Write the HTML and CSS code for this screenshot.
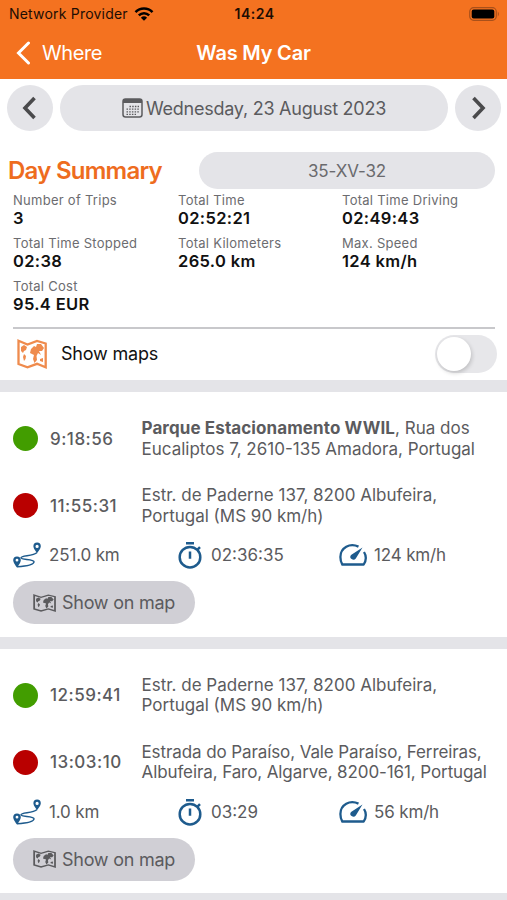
FILE: index.html
```html
<!DOCTYPE html>
<html lang="en">
<head>
<meta charset="utf-8">
<title>Was My Car</title>
<link rel="stylesheet" href="styles.css">
</head>
<body>
<svg class="defs" width="0" height="0" aria-hidden="true">
  <symbol id="map" viewBox="0 0 30 30">
    <path d="M1.500 1.800 L10.500 5.500 L20 2 L28.700 4.500 V28.200 L20 24.800 L10.500 28.300 L1.500 25 Z" fill="none" stroke="currentColor" stroke-width="2.300"/>
    <path d="M4 8 L7 6 L10 8 L9 11 L7 12 L6 14 L4 12 Z M7 15 L9 17 L8.500 20 L7 22 L6 18 Z M14 10 L17 7 L19 8 L20 5 L24 5 L27 9 L25 12 L22 12 L24 16 L21 14 L19.500 17 L20 21 L17.500 24 L16 20 L17 16 L13 14 Z M23 20 L26 19 L26 23 L23 22 Z" fill="currentColor"/>
  </symbol>
  <symbol id="route" viewBox="0 0 28 26">
    <path d="M24 10.500 C20 14.500 8 13 8 15.800 C8 18 21 16.800 21 19.800 C21 23 12 24.300 4 24.800" fill="none" stroke="currentColor" stroke-width="1.500"/>
    <path fill-rule="evenodd" d="M24.100 .5 A3.700 3.700 0 0 0 20.400 4.300 C20.400 7 24.100 11 24.100 11 S27.800 7 27.800 4.300 A3.700 3.700 0 0 0 24.100 .5 Z M24.100 2.800 A1.600 1.600 0 1 1 24.100 6 A1.600 1.600 0 1 1 24.100 2.800 Z M4 14.500 A3.800 3.800 0 0 0 .2 18.300 C.2 21 4 25.500 4 25.500 S7.800 21 7.800 18.300 A3.800 3.800 0 0 0 4 14.500 Z M4 16.800 A1.400 1.400 0 1 1 4 19.600 A1.400 1.400 0 1 1 4 16.800 Z" fill="currentColor"/>
  </symbol>
  <symbol id="timer" viewBox="0 0 24 28">
    <g fill="none" stroke="currentColor" stroke-width="2.500">
      <circle cx="12" cy="16.200" r="10.300"/>
      <path d="M8 2.300 H16 M12 10.500 V17.800 M19.300 8.900 L22 6.200"/>
    </g>
  </symbol>
  <symbol id="gauge" viewBox="0 0 28 24">
    <path d="M19.500 3.600 C11 -.5 1.400 4.500 1.400 14 C1.400 17 2 19.500 3.300 21.500 H24.700 C27.200 17.500 27.200 12.500 25 9" fill="none" stroke="currentColor" stroke-width="2.300" stroke-linejoin="round"/>
    <path d="M23.500 4.500 L16.800 15.500 A2.800 2.800 0 0 1 12 11.900 Z" fill="currentColor"/>
  </symbol>
</svg>

<header class="header">
  <div class="status">
    <div class="carrier"><span>Network Provider</span>
      <svg width="20" height="14" viewBox="0 0 20 14"><g fill="none" stroke="#000" stroke-width="2.500"><path d="M1.500 5.200 C6.200 .3 13.800 .3 18.500 5.200"/><path d="M4.800 8.400 C7.800 5.500 12.200 5.500 15.200 8.400"/></g><path d="M10 13.800 L6.900 10.700 Q10 8 13.100 10.700 Z"/></svg>
    </div>
    <span class="clock">14:24</span>
    <svg class="battery" width="31" height="14" viewBox="0 0 31 14"><rect x=".7" y=".7" width="26.600" height="12.600" rx="4" fill="none" stroke="#a9501a" stroke-width="1.200"/><rect x="2.700" y="2.500" width="22.600" height="9" rx="2"/><path d="M28.800 4.500 Q31 7 28.800 9.500 Z" fill="#a9501a"/></svg>
  </div>
  <nav class="nav">
    <a class="back"><svg width="15" height="24" viewBox="0 0 15 24"><path d="M12.500 2 L2.500 12 L12.500 22" fill="none" stroke="#fff" stroke-width="3" stroke-linecap="round"/></svg><span>Where</span></a>
    <h1 class="title">Was My Car</h1>
  </nav>
</header>

<div class="dates">
  <button class="round"><svg width="16" height="24" viewBox="0 0 16 24"><path d="M12.500 2 L3 12 L12.500 22" fill="none" stroke="currentColor" stroke-width="3.600"/></svg></button>
  <button class="day"><svg width="21" height="20" viewBox="0 0 21 20"><rect x="1" y="1" width="19" height="18" rx="2.500" fill="none" stroke="currentColor" stroke-width="1.500"/><path d="M1 2.500 Q1 1 3 1 H18 Q20 1 20 2.500 V5 H1 Z" fill="currentColor"/><path d="M7.500 8.500 H17 M4.500 11.200 H17 M4.500 13.800 H17 M4.500 16.300 H14" stroke="currentColor" stroke-width="1.300" stroke-dasharray="1.500 1.200"/></svg><span>Wednesday, 23 August 2023</span></button>
  <button class="round"><svg width="16" height="24" viewBox="0 0 16 24"><path d="M3.500 2 L13 12 L3.500 22" fill="none" stroke="currentColor" stroke-width="3.600"/></svg></button>
</div>

<section class="summary">
  <div class="summary-head">
    <h2>Day Summary</h2>
    <button class="plate">35-XV-32</button>
  </div>
  <dl class="stats">
    <div><dt>Number of Trips</dt><dd>3</dd></div>
    <div><dt>Total Time</dt><dd>02:52:21</dd></div>
    <div><dt>Total Time Driving</dt><dd>02:49:43</dd></div>
    <div><dt>Total Time Stopped</dt><dd>02:38</dd></div>
    <div><dt>Total Kilometers</dt><dd>265.0 km</dd></div>
    <div><dt>Max. Speed</dt><dd>124 km/h</dd></div>
    <div><dt>Total Cost</dt><dd>95.4 EUR</dd></div>
  </dl>
  <div class="maps">
    <svg class="maps-icon" width="30" height="30"><use href="#map"/></svg>
    <span>Show maps</span>
    <span class="switch"><span class="knob"></span></span>
  </div>
</section>

<article class="trip">
  <div class="stop"><i class="dot start"></i><time>9:18:56</time><p><b>Parque Estacionamento WWIL</b>, Rua dos<br>Eucaliptos 7, 2610-135 Amadora, Portugal</p></div>
  <div class="stop"><i class="dot end"></i><time>11:55:31</time><p>Estr. de Paderne 137, 8200 Albufeira,<br>Portugal (MS 90 km/h)</p></div>
  <div class="figures">
    <span class="distance"><svg width="28" height="26"><use href="#route"/></svg>251.0 km</span>
    <span class="duration"><svg width="24" height="28"><use href="#timer"/></svg>02:36:35</span>
    <span class="speed"><svg width="28" height="24"><use href="#gauge"/></svg>124 km/h</span>
  </div>
  <button class="show"><svg width="23" height="18" viewBox="0 0 30 30" preserveAspectRatio="none"><use href="#map" width="30" height="30"/></svg><span>Show on map</span></button>
</article>

<article class="trip">
  <div class="stop"><i class="dot start"></i><time>12:59:41</time><p>Estr. de Paderne 137, 8200 Albufeira,<br>Portugal (MS 90 km/h)</p></div>
  <div class="stop"><i class="dot end"></i><time>13:03:10</time><p class="long">Estrada do Paraíso, Vale Paraíso, Ferreiras,<br>Albufeira, Faro, Algarve, 8200-161, Portugal</p></div>
  <div class="figures">
    <span class="distance"><svg width="28" height="26"><use href="#route"/></svg>1.0 km</span>
    <span class="duration"><svg width="24" height="28"><use href="#timer"/></svg>03:29</span>
    <span class="speed"><svg width="28" height="24"><use href="#gauge"/></svg>56 km/h</span>
  </div>
  <button class="show"><svg width="23" height="18" viewBox="0 0 30 30" preserveAspectRatio="none"><use href="#map" width="30" height="30"/></svg><span>Show on map</span></button>
</article>
<div class="end-band"></div>
</body>
</html>
```
FILE: styles.css
```css
* { box-sizing: border-box; margin: 0; padding: 0; }
html { overflow: hidden; }
body {
  height: 900px;
  overflow: hidden;
  background: #fff;
  color: #5b5b5e;
  font-family: Inter, "Liberation Sans", sans-serif;
  white-space: nowrap;
}
svg { display: block; flex: none; }
.defs { position: absolute; }
button { border: 0; font: inherit; color: inherit; display: flex; align-items: center; justify-content: center; background: #e4e4e8; white-space: nowrap; }

.header { height: 79px; background: #f47220; }
.status { height: 27px; display: grid; grid-template-columns: 1fr auto 1fr; align-items: center; padding: 0 7px 0 9px; color: #1d0d03; }
.carrier { display: flex; align-items: center; gap: 6px; font-size: 14px; letter-spacing: 0.2px; }
.clock { font-size: 14px; font-weight: 600; letter-spacing: 0.5px; }
.battery { justify-self: end; }
.nav { height: 52px; display: grid; grid-template-columns: 1fr auto 1fr; align-items: center; padding: 0 16px; color: #fff; }
.back { display: flex; align-items: center; gap: 11px; font-size: 20px; letter-spacing: -0.4px; }
.title { font-size: 20px; font-weight: 600; letter-spacing: -0.2px; }

.dates { display: flex; justify-content: space-between; padding: 6px 6px 0 7px; height: 73px; color: #5b5b5e; }
.round { width: 46px; height: 46px; border-radius: 50%; color: #4a4a4c; }
.day { width: 388px; height: 46px; border-radius: 23px; gap: 3px; font-size: 18px; letter-spacing: -0.24px; }

.summary-head { display: flex; align-items: center; justify-content: space-between; padding: 0 12px 0 8px; height: 37px; }
.summary-head h2 { font-size: 24px; font-weight: 600; letter-spacing: -0.75px; color: #ee6c1e; }
.plate { width: 296px; height: 37px; border-radius: 19px; font-size: 17px; letter-spacing: -0.1px; color: #6a6a6d; }
.stats { display: grid; grid-template-columns: 165px 164px 1fr; grid-auto-rows: 43px; margin: 2px 12px 0 13px; height: 138px; border-bottom: 2px solid #c8c8cb; }
.stats dt { font-size: 13px; line-height: 18px; letter-spacing: 0.27px; color: #6c6c70; }
.stats dd { font-size: 16.500px; line-height: 19px; font-weight: 600; letter-spacing: 0.35px; color: #111; }
.maps { height: 51px; display: flex; align-items: center; padding: 0 10px 2px 17px; color: #111; font-size: 18px; letter-spacing: -0.2px; }
.maps-icon { color: #ef8b4d; margin-right: 14px; }
.switch { margin-left: auto; width: 62px; height: 38px; padding: 2px; border-radius: 19px; background: #e7e7ea; }
.knob { display: block; width: 34px; height: 34px; border-radius: 50%; background: #fff; box-shadow: 1px 2px 4px rgba(0, 0, 0, 0.18); }

.trip { height: 256.700px; border-top: 12px solid #e4e4e8; padding: 26px 12px 0 13px; font-size: 17px; }
.stop { display: grid; grid-template-columns: 37px 91.500px 1fr; align-items: center; height: 41px; margin-bottom: 26px; }
.dot { width: 25px; height: 25px; border-radius: 50%; }
.start { background: #429d00; }
.end { background: #b90000; }
.stop time { font-weight: 500; letter-spacing: 0.5px; }
.stop p { line-height: 20.500px; font-size: 17px; }
.stop b { letter-spacing: 0.1px; }
.stop .long { letter-spacing: -0.1px; }
.figures { display: grid; grid-template-columns: 165px 161px 1fr; height: 28px; margin-top: -11px; }
.figures span { display: flex; align-items: center; letter-spacing: -0.15px; }
.figures .duration { letter-spacing: 0; }
.figures svg { color: #1e5b8d; }
.distance svg { margin-right: 8px; }
.duration svg { margin-right: 9px; }
.speed svg { margin-right: 7px; }
.show { width: 182px; height: 43px; border-radius: 22px; margin-top: 12px; background: #d0cfd5; font-size: 18px; letter-spacing: -0.25px; gap: 6px; }
.end-band { height: 12px; background: #e4e4e8; }
```
